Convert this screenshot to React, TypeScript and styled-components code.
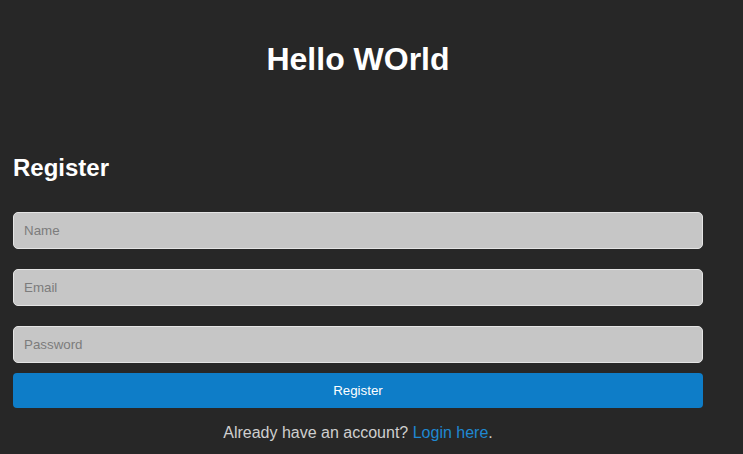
import React from "react";
import styled, { createGlobalStyle } from "styled-components";

const GlobalStyle = createGlobalStyle`
  html, body {
    margin: 0;
    padding: 0;
    background: #272727;
  }
  body {
    font-family: "Liberation Sans", Arial, sans-serif;
  }
`;

const Page = styled.div`
  min-height: 454px;
  background: #272727;
  padding: 41px 0 0 13px;
  box-sizing: border-box;
`;

const Container = styled.div`
  width: 690px;
  display: flex;
  flex-direction: column;
`;

const Title = styled.h1`
  margin: 0;
  font-size: 32px;
  font-weight: bold;
  color: #ffffff;
  text-align: center;
`;

const Heading = styled.h2`
  margin: 76px 0 0;
  font-size: 24px;
  font-weight: bold;
  color: #ffffff;
`;

const Form = styled.form`
  margin-top: 30px;
  display: flex;
  flex-direction: column;
`;

const Input = styled.input<{ $last?: boolean }>`
  height: 37px;
  box-sizing: border-box;
  margin-bottom: ${(p) => (p.$last ? "10px" : "20px")};
  padding: 0 10px;
  background: #c6c6c6;
  border: 1px solid #e4e4e4;
  border-radius: 5px;
  font-family: "Liberation Sans", Arial, sans-serif;
  font-size: 13.33px;
  color: #222;
  outline: none;
  &::placeholder {
    color: #7c7c7c;
  }
`;

const Button = styled.button`
  height: 35px;
  border: none;
  border-radius: 4px;
  background: #0e7dc8;
  color: #ffffff;
  font-family: "Liberation Sans", Arial, sans-serif;
  font-size: 13.33px;
  cursor: pointer;
`;

const Footer = styled.p`
  margin: 16px 0 0;
  text-align: center;
  font-size: 16px;
  color: #cfcfcf;
`;

const Link = styled.a`
  color: #1f88d1;
  text-decoration: none;
`;

export default function App() {
  return (
    <Page>
      <GlobalStyle />
      <Container>
        <Title>Hello WOrld</Title>
        <Heading>Register</Heading>
        <Form onSubmit={(e) => e.preventDefault()}>
          <Input type="text" placeholder="Name" />
          <Input type="email" placeholder="Email" />
          <Input type="password" placeholder="Password" $last />
          <Button type="submit">Register</Button>
        </Form>
        <Footer>
          Already have an account? <Link href="#">Login here</Link>.
        </Footer>
      </Container>
    </Page>
  );
}
